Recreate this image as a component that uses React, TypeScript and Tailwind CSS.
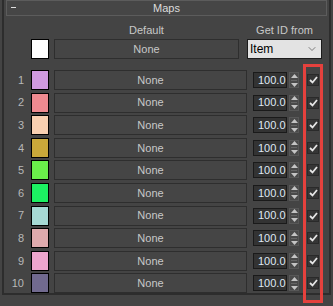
import { ChevronDown } from "lucide-react";

const SWATCHES = [
  "#d09ae0",
  "#ee8a90",
  "#f8cfb0",
  "#c9a83a",
  "#6aee4a",
  "#1cf062",
  "#a6d9d4",
  "#dfaaad",
  "#eda5cd",
  "#716a8f",
];

function Spinner() {
  return (
    <div className="ml-[2px] w-[10px] h-[16px] flex flex-col items-center justify-center gap-[2px] bg-[#4a4a4a] border border-[#575757]">
      <svg width="7" height="4" viewBox="0 0 7 4">
        <path d="M0 4 L3.5 0 L7 4 Z" fill="#c4c4c4" />
      </svg>
      <div className="w-[6px] h-px bg-[#666]" />
      <svg width="7" height="4" viewBox="0 0 7 4">
        <path d="M0 0 L3.5 4 L7 0 Z" fill="#c4c4c4" />
      </svg>
    </div>
  );
}

function Check() {
  return (
    <div className="ml-[8px] w-[12px] h-[12px] flex items-center justify-center bg-[#363636] border border-[#2a2a2a]">
      <svg width="9" height="8" viewBox="0 0 9 8">
        <path d="M1 4 L3.5 6.5 L8 1" fill="none" stroke="#e6e6e6" strokeWidth="1.8" />
      </svg>
    </div>
  );
}

export default function App() {
  return (
    <div
      className="relative w-[333px] h-[306px] bg-[#444444] text-[11px] text-[#c8c8c8] overflow-hidden"
      style={{ fontFamily: '"Liberation Sans", Arial, sans-serif' }}
    >
      <div className="mt-[8px] mx-[2px] h-[295px] border-x-2 border-b-2 border-[#2d2d2d]">
        {/* rollout header */}
        <div className="-mt-[8px] mx-[2px] h-[16px] relative flex items-center justify-center bg-[#464646] border border-[#5c5c5c] text-[#dcdcdc]">
          <span className="absolute left-[4px] top-[6px] w-[5px] h-px bg-[#e0e0e0]" />
          <span>Maps</span>
        </div>

        {/* column titles */}
        <div className="flex items-center h-[16px] mt-[6px]">
          <div className="w-[20px]" />
          <div className="ml-[7px] w-[18px]" />
          <div className="ml-[5px] w-[185px] text-center">Default</div>
          <div className="ml-[8px] w-[75px] text-center">Get ID from</div>
        </div>

        {/* default row */}
        <div className="flex items-center h-[20px] mt-[1px]">
          <div className="w-[20px]" />
          <div className="ml-[7px] w-[18px] h-[20px] bg-white border border-black" />
          <div className="ml-[5px] w-[185px] h-[20px] flex items-center justify-center border border-[#2e2e2e] bg-[#454545]">
            None
          </div>
          <div className="ml-[8px] w-[75px] h-[20px] flex items-center justify-between pl-[2px] pr-[3px] bg-[#e3e3e3] border border-[#1c1c1c] text-black text-[12px]">
            <span>Item</span>
            <ChevronDown size={12} strokeWidth={1.3} color="#444" />
          </div>
        </div>

        {/* map rows */}
        <div className="flex flex-col gap-[2.6px] mt-[11px]">
          {SWATCHES.map((c, i) => (
            <div key={i} className="flex items-center h-[20px]">
              <div className="w-[20px] text-right text-[#b8b8b8]">{i + 1}</div>
              <div className="ml-[7px] w-[18px] h-[20px] border border-black" style={{ backgroundColor: c }} />
              <div className="ml-[5px] w-[193px] h-[20px] flex items-center justify-center border border-[#2e2e2e] bg-[#454545]">
                None
              </div>
              <div className="ml-[6px] w-[34px] h-[16px] flex items-center pl-[4px] bg-[#333333] border border-[#1a1a1a] text-[#dfe8f4]">
                100.0
              </div>
              <Spinner />
              <Check />
            </div>
          ))}
        </div>
      </div>

      {/* highlight annotation */}
      <div className="absolute left-[303px] top-[64px] w-[20px] h-[239px] border-[3px] border-[#e5413d]" />
    </div>
  );
}
